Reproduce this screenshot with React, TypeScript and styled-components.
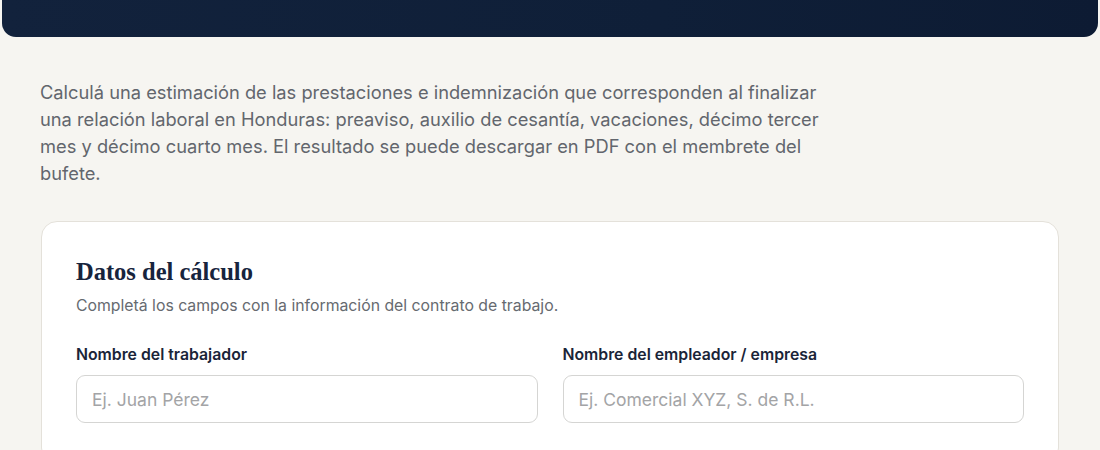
import React from "react";
import styled, { createGlobalStyle } from "styled-components";

const Global = createGlobalStyle`
  html, body { margin: 0; padding: 0; background: #f6f5f1; }
  body { font-family: Inter, "Noto Sans", sans-serif; -webkit-font-smoothing: antialiased; }
  * { box-sizing: border-box; }
`;

const Page = styled.div`
  width: 1100px;
  height: 450px;
  overflow: hidden;
  padding: 0 2px;
`;

const Hero = styled.header`
  height: 37px;
  background: linear-gradient(90deg, #12223c 0%, #0f1f38 60%, #0d1b33 100%);
  border-radius: 0 0 14px 14px;
`;

const Main = styled.main`
  padding: 42px 39px 0 39px;
`;

const Intro = styled.p`
  margin: 0 0 0 -1px;
  max-width: 800px;
  font-size: 18.3px;
  line-height: 27px;
  color: #62666d;
`;

const Card = styled.section`
  margin-top: 34px;
  background: #ffffff;
  border: 1px solid #e4e1da;
  border-radius: 16px;
  padding: 36px 34px 40px 34px;
`;

const Title = styled.h2`
  margin: 0;
  font-family: "Liberation Serif", "DejaVu Serif", serif;
  font-weight: 700;
  font-size: 24.5px;
  line-height: 28px;
  color: #17243d;
`;

const Subtitle = styled.p`
  margin: 9px 0 0;
  font-size: 15.8px;
  line-height: 22px;
  color: #666a70;
`;

const Grid = styled.div`
  margin-top: 27px;
  display: grid;
  grid-template-columns: 1fr 1fr;
  column-gap: 25px;
`;

const Field = styled.label`
  display: flex;
  flex-direction: column;
  gap: 9px;
`;

const Label = styled.span`
  font-size: 15.8px;
  line-height: 22px;
  font-weight: 600;
  color: #1a2438;
`;

const Input = styled.input`
  height: 48px;
  border: 1px solid #d5d5d3;
  border-radius: 9px;
  padding: 0 15px;
  font-family: Inter, "Noto Sans", sans-serif;
  font-size: 17.5px;
  color: #1a2438;
  background: #fff;
  outline: none;
  &::placeholder { color: #a3a4a6; }
`;

export default function App() {
  return (
    <>
      <Global />
      <Page>
        <Hero />
        <Main>
          <Intro>
            Calculá una estimación de las prestaciones e indemnización que corresponden al finalizar
            una relación laboral en Honduras: preaviso, auxilio de cesantía, vacaciones, décimo tercer
            mes y décimo cuarto mes. El resultado se puede descargar en PDF con el membrete del
            bufete.
          </Intro>
          <Card>
            <Title>Datos del cálculo</Title>
            <Subtitle>Completá los campos con la información del contrato de trabajo.</Subtitle>
            <Grid>
              <Field>
                <Label>Nombre del trabajador</Label>
                <Input placeholder="Ej. Juan Pérez" />
              </Field>
              <Field>
                <Label>Nombre del empleador / empresa</Label>
                <Input placeholder="Ej. Comercial XYZ, S. de R.L." />
              </Field>
            </Grid>
          </Card>
        </Main>
      </Page>
    </>
  );
}
